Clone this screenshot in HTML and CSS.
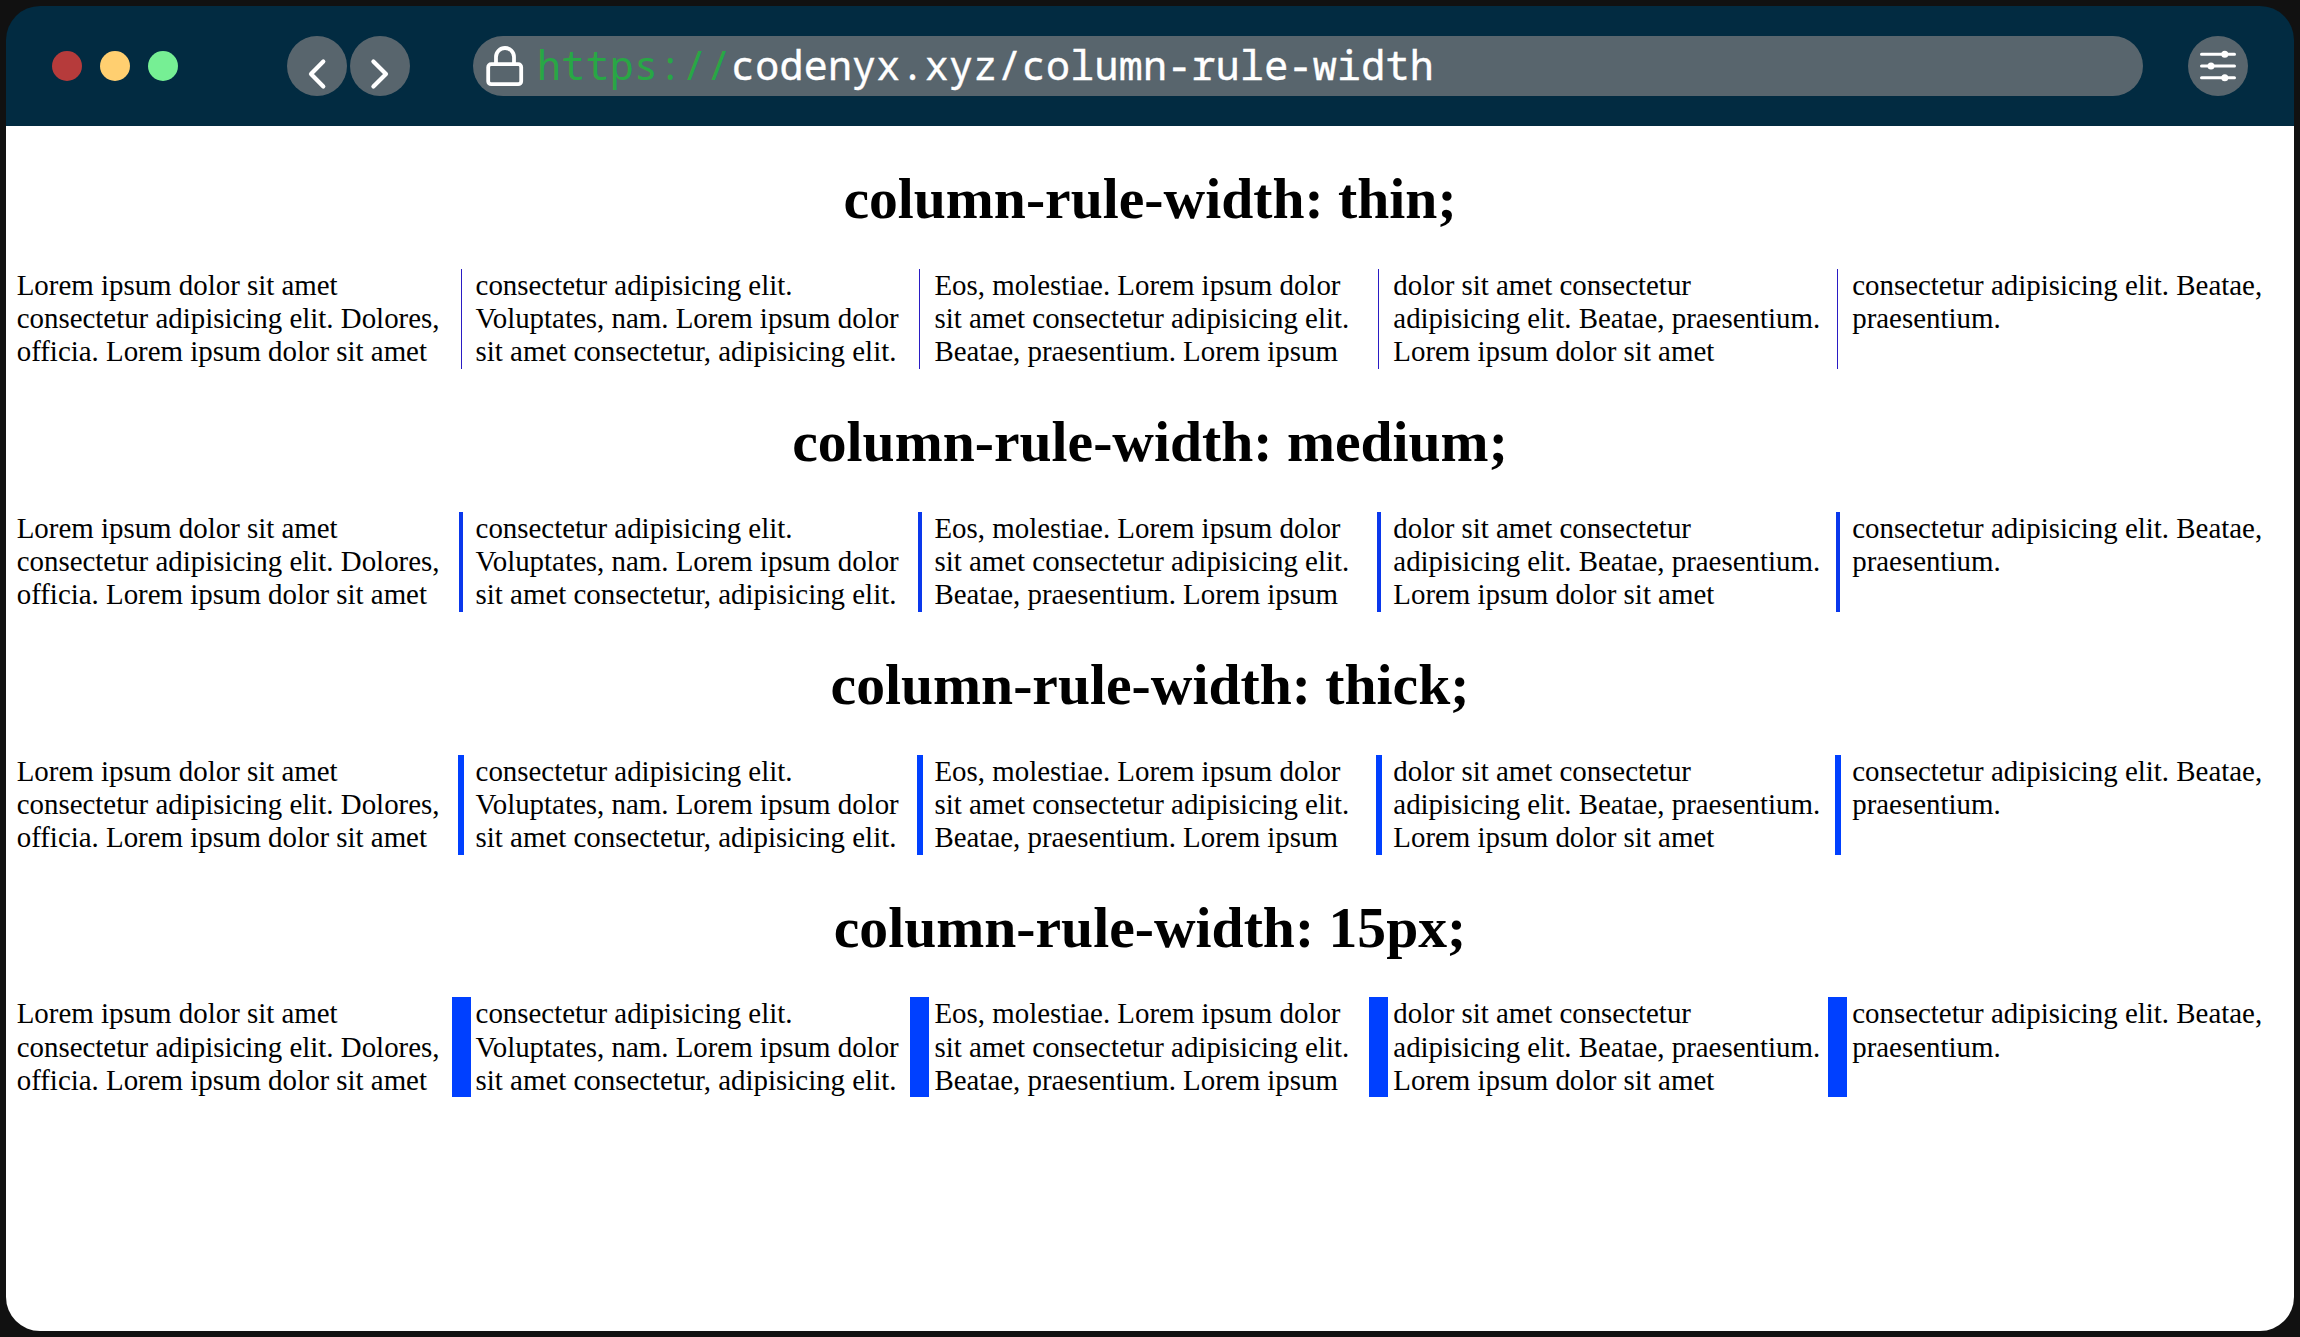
FILE: index.html
```html
<!DOCTYPE html>
<html lang="en">
<head>
<meta charset="utf-8">
<title>column-rule-width</title>
<link rel="stylesheet" href="styles.css">
</head>
<body>
<div class="window">
  <header class="toolbar">
    <div class="lights">
      <span class="light light-close"></span>
      <span class="light light-min"></span>
      <span class="light light-max"></span>
    </div>
    <nav class="nav">
      <button class="round" aria-label="Back"><svg width="60" height="60" viewBox="0 0 60 60"><path d="M36.300 25.500 24 38l12.300 12.500"/></svg></button>
      <button class="round" aria-label="Forward"><svg width="60" height="60" viewBox="0 0 60 60"><path d="M23.400 25.500 36 38 23.400 50.500"/></svg></button>
    </nav>
    <div class="address">
      <svg class="lock" width="38" height="42" viewBox="0 0 38 42"><rect x="2.200" y="19.200" width="33" height="20" rx="3"/><path d="M10 19V12a9 9 0 0 1 18 0V19"/></svg>
      <span class="url"><span class="scheme">https://</span>codenyx.xyz/column-rule-width</span>
    </div>
    <button class="round" aria-label="Settings">
      <svg class="sliders" width="60" height="60" viewBox="0 0 60 60"><path d="M13.500 18.300h33M13.500 30h33M13.500 41.700h33"/><circle cx="36.800" cy="18.300" r="3.500"/><circle cx="23" cy="30" r="3.500"/><circle cx="36.800" cy="41.700" r="3.500"/></svg>
    </button>
  </header>
  <main class="page">
    <section>
      <h1>column-rule-width: thin;</h1>
      <p class="columns thin">Lorem ipsum dolor sit amet consectetur adipisicing elit. Dolores, officia. Lorem ipsum dolor sit amet consectetur adipisicing elit. Voluptates, nam. Lorem ipsum dolor sit amet consectetur, adipisicing elit. Eos, molestiae. Lorem ipsum dolor sit amet consectetur adipisicing elit. Beatae, praesentium. Lorem ipsum dolor sit amet consectetur adipisicing elit. Beatae, praesentium. Lorem ipsum dolor sit amet consectetur adipisicing elit. Beatae, praesentium.</p>
    </section>
    <section>
      <h1>column-rule-width: medium;</h1>
      <p class="columns medium">Lorem ipsum dolor sit amet consectetur adipisicing elit. Dolores, officia. Lorem ipsum dolor sit amet consectetur adipisicing elit. Voluptates, nam. Lorem ipsum dolor sit amet consectetur, adipisicing elit. Eos, molestiae. Lorem ipsum dolor sit amet consectetur adipisicing elit. Beatae, praesentium. Lorem ipsum dolor sit amet consectetur adipisicing elit. Beatae, praesentium. Lorem ipsum dolor sit amet consectetur adipisicing elit. Beatae, praesentium.</p>
    </section>
    <section>
      <h1>column-rule-width: thick;</h1>
      <p class="columns thick">Lorem ipsum dolor sit amet consectetur adipisicing elit. Dolores, officia. Lorem ipsum dolor sit amet consectetur adipisicing elit. Voluptates, nam. Lorem ipsum dolor sit amet consectetur, adipisicing elit. Eos, molestiae. Lorem ipsum dolor sit amet consectetur adipisicing elit. Beatae, praesentium. Lorem ipsum dolor sit amet consectetur adipisicing elit. Beatae, praesentium. Lorem ipsum dolor sit amet consectetur adipisicing elit. Beatae, praesentium.</p>
    </section>
    <section>
      <h1>column-rule-width: 15px;</h1>
      <p class="columns wide">Lorem ipsum dolor sit amet consectetur adipisicing elit. Dolores, officia. Lorem ipsum dolor sit amet consectetur adipisicing elit. Voluptates, nam. Lorem ipsum dolor sit amet consectetur, adipisicing elit. Eos, molestiae. Lorem ipsum dolor sit amet consectetur adipisicing elit. Beatae, praesentium. Lorem ipsum dolor sit amet consectetur adipisicing elit. Beatae, praesentium. Lorem ipsum dolor sit amet consectetur adipisicing elit. Beatae, praesentium.</p>
    </section>
  </main>
</div>
</body>
</html>
```
FILE: styles.css
```css
* { box-sizing: border-box; }

body {
  margin: 0;
  padding: 6px;
  height: 1337px;
  background: #111;
  overflow: hidden;
}

.window {
  display: flex;
  flex-direction: column;
  height: 1325px;
  border-radius: 34px;
  overflow: hidden;
}

.toolbar {
  display: flex;
  align-items: center;
  flex: none;
  height: 120px;
  padding: 0 46px;
  background: #022b41;
}

.lights { display: flex; gap: 18px; }
.light { width: 30px; height: 30px; border-radius: 50%; }
.light-close { background: #b63b3b; }
.light-min { background: #ffcf70; }
.light-max { background: #76ef94; }

.nav { display: flex; gap: 3px; margin-left: 109px; }

.round {
  width: 60px;
  height: 60px;
  padding: 0;
  border: 0;
  border-radius: 50%;
  background: #58656d;
}
.round svg {
  display: block;
  fill: none;
  stroke: #fff;
  stroke-width: 4.2;
  stroke-linecap: round;
  stroke-linejoin: round;
}
.round .sliders { stroke-width: 3; }
.sliders circle { fill: #fff; stroke: none; }

.address {
  display: flex;
  align-items: center;
  flex: 1;
  height: 60px;
  margin: 0 45px 0 63px;
  padding-left: 13px;
  border-radius: 30px;
  background: #58656d;
}
.lock { fill: none; stroke: #fff; stroke-width: 3.8; }
.url {
  margin: 0 0 2px 13px;
  font: 40px/58px "Noto Sans Mono", "Liberation Mono", monospace;
  letter-spacing: 0.24px;
  color: #fff;
  white-space: nowrap;
  -webkit-text-stroke: 0.4px #fff;
}
.scheme { color: #28a745; -webkit-text-stroke: 0; }

.page {
  flex: 1;
  padding: 38px 0 0;
  background: #fff;
  font-family: "Liberation Serif", "Times New Roman", serif;
  color: #000;
}

h1 {
  margin: 0 0 36.8px;
  padding-top: 2px;
  font-size: 57.65px;
  line-height: 66px;
  font-weight: bold;
  text-align: center;
}

.columns {
  width: 2265.5px;
  height: 100px;
  margin: 0 0 38.1px 10.7px;
  font-size: 28.9px;
  line-height: 33.33px;
  column-count: 5;
  column-gap: 28.9px;
  column-fill: auto;
  column-rule: 1px solid #2a1cc4;
}
.medium { column-rule: 4px solid #0a38ec; }
.thick { column-rule: 6px solid #0040ff; }
.wide { column-rule: 19px solid #0040ff; }
```
